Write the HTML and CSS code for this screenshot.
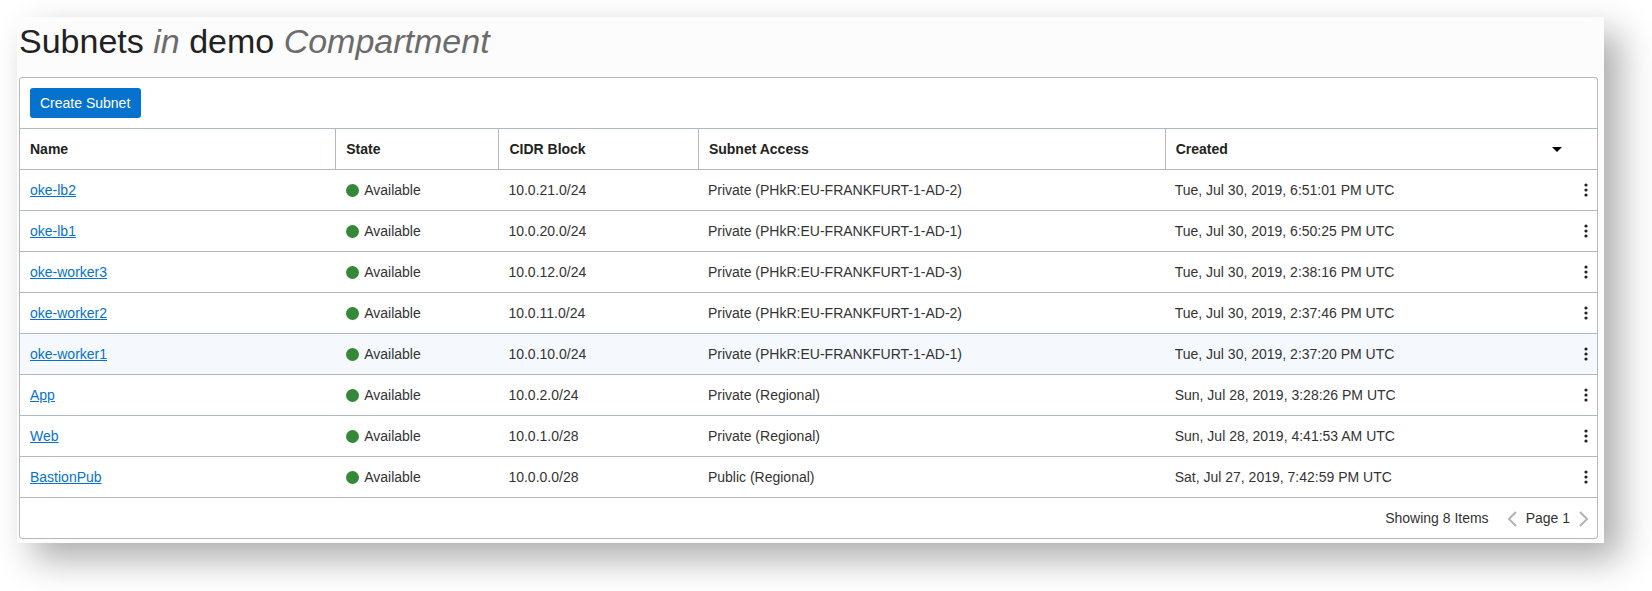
FILE: index.html
```html
<!DOCTYPE html>
<html lang="en">
<head>
<meta charset="utf-8">
<meta name="viewport" content="width=device-width, initial-scale=1">
<title>Subnets</title>
<link rel="stylesheet" href="styles.css">
</head>
<body>
<svg class="sprite" aria-hidden="true">
  <symbol id="dots" viewBox="0 0 4 14"><circle cx="2" cy="2" r="1.6"/><circle cx="2" cy="7" r="1.6"/><circle cx="2" cy="12" r="1.6"/></symbol>
</svg>
<main class="page">
  <h1 class="title">Subnets <em>in</em> demo <em>Compartment</em></h1>
  <section class="panel">
    <div class="toolbar"><button class="create" type="button">Create Subnet</button></div>
    <table class="subnets">
      <colgroup>
        <col class="col-name"><col class="col-state"><col class="col-cidr"><col class="col-access"><col><col class="col-menu">
      </colgroup>
      <thead>
        <tr>
          <th scope="col">Name</th>
          <th scope="col">State</th>
          <th scope="col">CIDR Block</th>
          <th scope="col">Subnet Access</th>
          <th scope="col" colspan="2" aria-sort="descending"><button class="sort" type="button">Created <svg class="caret" viewBox="0 0 10 5" aria-hidden="true"><path d="M0 0h10L5 5z"/></svg></button></th>
        </tr>
      </thead>
      <tbody>
        <tr><td><a href="#">oke-lb2</a></td><td><span class="state">Available</span></td><td>10.0.21.0/24</td><td>Private (PHkR:EU-FRANKFURT-1-AD-2)</td><td>Tue, Jul 30, 2019, 6:51:01 PM UTC</td><td class="menu-cell"><button class="menu" type="button" aria-label="Actions"><svg><use href="#dots"/></svg></button></td></tr>
        <tr><td><a href="#">oke-lb1</a></td><td><span class="state">Available</span></td><td>10.0.20.0/24</td><td>Private (PHkR:EU-FRANKFURT-1-AD-1)</td><td>Tue, Jul 30, 2019, 6:50:25 PM UTC</td><td class="menu-cell"><button class="menu" type="button" aria-label="Actions"><svg><use href="#dots"/></svg></button></td></tr>
        <tr><td><a href="#">oke-worker3</a></td><td><span class="state">Available</span></td><td>10.0.12.0/24</td><td>Private (PHkR:EU-FRANKFURT-1-AD-3)</td><td>Tue, Jul 30, 2019, 2:38:16 PM UTC</td><td class="menu-cell"><button class="menu" type="button" aria-label="Actions"><svg><use href="#dots"/></svg></button></td></tr>
        <tr><td><a href="#">oke-worker2</a></td><td><span class="state">Available</span></td><td>10.0.11.0/24</td><td>Private (PHkR:EU-FRANKFURT-1-AD-2)</td><td>Tue, Jul 30, 2019, 2:37:46 PM UTC</td><td class="menu-cell"><button class="menu" type="button" aria-label="Actions"><svg><use href="#dots"/></svg></button></td></tr>
        <tr class="active"><td><a href="#">oke-worker1</a></td><td><span class="state">Available</span></td><td>10.0.10.0/24</td><td>Private (PHkR:EU-FRANKFURT-1-AD-1)</td><td>Tue, Jul 30, 2019, 2:37:20 PM UTC</td><td class="menu-cell"><button class="menu" type="button" aria-label="Actions"><svg><use href="#dots"/></svg></button></td></tr>
        <tr><td><a href="#">App</a></td><td><span class="state">Available</span></td><td>10.0.2.0/24</td><td>Private (Regional)</td><td>Sun, Jul 28, 2019, 3:28:26 PM UTC</td><td class="menu-cell"><button class="menu" type="button" aria-label="Actions"><svg><use href="#dots"/></svg></button></td></tr>
        <tr><td><a href="#">Web</a></td><td><span class="state">Available</span></td><td>10.0.1.0/28</td><td>Private (Regional)</td><td>Sun, Jul 28, 2019, 4:41:53 AM UTC</td><td class="menu-cell"><button class="menu" type="button" aria-label="Actions"><svg><use href="#dots"/></svg></button></td></tr>
        <tr><td><a href="#">BastionPub</a></td><td><span class="state">Available</span></td><td>10.0.0.0/28</td><td>Public (Regional)</td><td>Sat, Jul 27, 2019, 7:42:59 PM UTC</td><td class="menu-cell"><button class="menu" type="button" aria-label="Actions"><svg><use href="#dots"/></svg></button></td></tr>
      </tbody>
    </table>
    <footer class="pager">
      <span class="count">Showing 8 Items</span>
      <button class="step" type="button" aria-label="Previous page"><svg viewBox="0 0 10 16"><path d="M9 1L2 8l7 7"/></svg></button>
      <span>Page 1</span>
      <button class="step" type="button" aria-label="Next page"><svg viewBox="0 0 10 16"><path d="M1 1l7 7-7 7"/></svg></button>
    </footer>
  </section>
</main>
</body>
</html>
```
FILE: styles.css
```css
* { box-sizing: border-box; }
body {
  margin: 0;
  padding: 17px 48px 48px 17px;
  background: #fff;
  color: #333;
  font: 14px/20px "Liberation Sans", Arial, sans-serif;
}
button {
  padding: 0;
  border: 0;
  background: none;
  color: inherit;
  font: inherit;
  cursor: pointer;
}
.sprite { display: none; }
.page {
  padding: 4px 6px 4px 2px;
  background: #fcfcfc;
  box-shadow: 16px 16px 34px rgba(0, 0, 0, 0.33);
}
.title {
  margin: 0 0 16px;
  color: #222;
  font-size: 34px;
  font-weight: 400;
  line-height: 40px;
}
.title em { color: #6b6b6b; }
.panel {
  border: 1px solid #b1b8c1;
  border-radius: 3px;
  background: #fff;
  overflow: hidden;
}
.toolbar { padding: 10px; }
.create {
  display: block;
  height: 30px;
  padding: 0 11px 0 10px;
  border-radius: 3px;
  background: #0572ce;
  color: #fff;
}
.subnets {
  width: 100%;
  table-layout: fixed;
  border-collapse: separate;
  border-spacing: 0;
}
.col-name { width: 20.05%; }
.col-state { width: 10.35%; }
.col-cidr { width: 12.65%; }
.col-access { width: 29.6%; }
.col-menu { width: 22px; }
th, td {
  height: 41px;
  padding: 0 9px;
  border-top: 1px solid #b1b8c1;
  text-align: left;
  vertical-align: middle;
}
th {
  padding-left: 10px;
  border-right: 1px solid #b1b8c1;
  color: #222;
  font-weight: 700;
}
th:last-child { border-right: 0; }
td:first-child, td:nth-child(2) { padding-left: 10px; }
.sort {
  display: flex;
  align-items: center;
  justify-content: space-between;
  width: 100%;
  padding-right: 26px;
}
.caret { width: 10px; height: 5px; fill: #000; }
.subnets a { color: #0572ce; text-decoration: underline; }
.state { display: flex; align-items: center; gap: 5px; }
.state::before {
  content: "";
  width: 13px;
  height: 13px;
  border-radius: 50%;
  background: #348838;
}
td.menu-cell { padding: 0; }
.menu { display: block; width: 22px; height: 24px; }
.menu svg { display: block; width: 4px; height: 14px; margin: 0 auto; fill: #222; }
.active td { background: #f5f9fd; }
.pager {
  display: flex;
  align-items: center;
  justify-content: flex-end;
  gap: 9px;
  height: 41px;
  padding-right: 8px;
  border-top: 1px solid #b1b8c1;
}
.count { margin-right: 9px; }
.step { padding-top: 2px; }
.step svg {
  display: block;
  width: 10px;
  height: 16px;
  fill: none;
  stroke: #b3b3b3;
  stroke-width: 2;
}
```
